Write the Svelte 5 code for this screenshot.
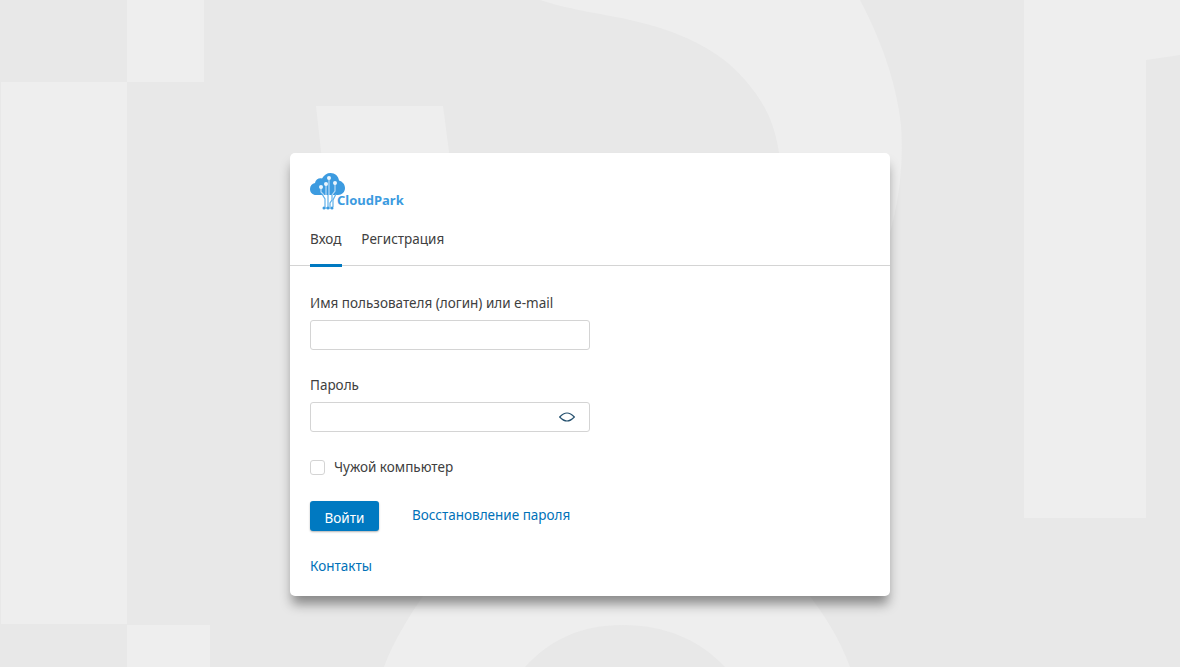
<script>
  let login = $state("");
  let password = $state("");
  let foreign = $state(false);
  let activeTab = $state("login");
</script>

<div class="page">
  <svg class="backdrop" viewBox="0 0 1180 667" aria-hidden="true">
    <path d="M127 0H204V82H127ZM1 82H127V624H1ZM127 625H210V667H127Z" />
    <path d="M316 106H443L450 160H322Z" />
    <path d="M540 0C570 10 610 15 630 20C680 31 720 50 745 80C765 103 776 125 780 160H880V240H888C898 205 904 170 901 125C896 80 880 38 860 0Z" />
    <path d="M384 667C394 640 408 618 427 590H805C825 615 840 640 850 667H725C700 640 665 625 623 625C580 625 550 640 525 667Z" />
    <path d="M1024 0H1180V55L1146 60V518H1024Z" />
  </svg>

  <main class="card">
    <header class="head">
      <div class="logo">
        <svg width="36" height="38" viewBox="0 0 36 38" aria-hidden="true">
          <path fill="#3c9be0" d="M6 22C2.500 22 0 19.500 0 16C0 13 2 10.500 5 10C5.500 6.500 9 4.500 12 5.500C14 2 17 0 20.500 0C25 0 28.500 3 29 7.500C32.500 8.500 35 11.500 35 15C35 19 32 22 28 22Z" />
          <g fill="none" stroke="#b7dbf6" stroke-width="1.200">
            <path d="M19 5V22" />
            <path d="M16 11V22" />
            <path d="M11 14V19L14 22" />
            <path d="M25 10V18L22 22" />
          </g>
          <g fill="none" stroke="#5fb0ea" stroke-width="1.200">
            <path d="M12 21L15 26V34" />
            <path d="M18 22V34" />
            <path d="M22 22V27L20 30V34" />
            <path d="M26 21L23 27V34" />
            <path d="M13 35H23" />
          </g>
          <g fill="#eaf5fd">
            <circle cx="19" cy="5" r="2" />
            <circle cx="16" cy="11" r="2" />
            <circle cx="11" cy="14" r="2" />
            <circle cx="25" cy="10" r="2" />
          </g>
          <g fill="#3c9be0">
            <circle cx="14" cy="35" r="1.500" />
            <circle cx="18" cy="35" r="1.500" />
            <circle cx="22" cy="35" r="1.500" />
          </g>
        </svg>
        <span class="brand">CloudPark</span>
      </div>
      <nav class="tabs">
        <button class="tab" class:active={activeTab === "login"} onclick={() => (activeTab = "login")}>Вход</button>
        <button class="tab" class:active={activeTab === "signup"} onclick={() => (activeTab = "signup")}>Регистрация</button>
      </nav>
    </header>

    <form class="form" onsubmit={(e) => e.preventDefault()}>
      <label class="field">
        <span>Имя пользователя (логин) или e-mail</span>
        <input type="text" bind:value={login} />
      </label>

      <label class="field">
        <span>Пароль</span>
        <div class="password">
          <input type="password" bind:value={password} />
          <svg class="eye" width="16" height="10" viewBox="0 0 16 10" aria-hidden="true">
            <path d="M0.700 5C3.500 2 5.500 1 8 1C10.500 1 12.500 2 15.300 5C12.500 8 10.500 9 8 9C5.500 9 3.500 8 0.700 5Z" />
          </svg>
        </div>
      </label>

      <label class="check">
        <input type="checkbox" bind:checked={foreign} />
        <span>Чужой компьютер</span>
      </label>

      <div class="actions">
        <button class="submit" type="submit">Войти</button>
        <a href="#restore">Восстановление пароля</a>
      </div>

      <a class="contacts" href="#contacts">Контакты</a>
    </form>
  </main>
</div>

<style>
  :global(body) {
    margin: 0;
    font-family: "Noto Sans", sans-serif;
  }
  * {
    box-sizing: border-box;
  }
  .page {
    position: relative;
    height: 667px;
    overflow: hidden;
    background: #e8e8e8;
    display: flex;
    justify-content: center;
    padding-top: 153px;
  }
  .backdrop {
    position: absolute;
    inset: 0;
    width: 100%;
    height: 100%;
    fill: #eeeeee;
  }
  .card {
    position: relative;
    width: 600px;
    height: 443px;
    background: #fff;
    border-radius: 5px;
    box-shadow: 0 10px 12px -2px rgba(0, 0, 0, 0.42);
  }
  .head {
    height: 113px;
    padding: 20px 20px 0;
    border-bottom: 1px solid #d4d4d4;
  }
  .logo {
    position: relative;
    height: 38px;
  }
  .brand {
    position: absolute;
    left: 27px;
    top: 18px;
    font-size: 13px;
    line-height: 19px;
    font-weight: 700;
    color: #3c9be0;
  }
  .tabs {
    display: flex;
    gap: 19px;
    margin-top: 16px;
  }
  .tab {
    height: 40px;
    padding: 0 1px 14px 0;
    border: 0;
    border-bottom: 3px solid transparent;
    background: none;
    font: inherit;
    font-size: 13.500px;
    color: #404040;
  }
  .tab.active {
    border-bottom-color: #0079c1;
  }
  .form {
    padding: 27px 20px 0;
    font-size: 13.500px;
    color: #404040;
  }
  .field {
    display: block;
    margin-bottom: 25px;
  }
  .field span {
    display: block;
    line-height: 20px;
    margin-bottom: 7px;
  }
  input[type="text"],
  input[type="password"] {
    display: block;
    width: 280px;
    height: 30px;
    border: 1px solid #d4d4d4;
    border-radius: 3px;
    background: #fff;
    outline: none;
  }
  .password {
    position: relative;
    width: 280px;
  }
  .eye {
    position: absolute;
    right: 15px;
    top: 10px;
    fill: none;
    stroke: #24506e;
    stroke-width: 1.200;
  }
  .check {
    display: flex;
    align-items: center;
    gap: 9px;
    height: 20px;
    margin-top: 25px;
  }
  .check input {
    appearance: none;
    width: 15px;
    height: 15px;
    margin: 0;
    border: 1px solid #d4d4d4;
    border-radius: 3px;
    background: #fff;
  }
  .actions {
    display: flex;
    align-items: center;
    gap: 33px;
    margin-top: 24px;
  }
  .actions a {
    margin-top: -2px;
  }
  .submit {
    width: 69px;
    height: 30px;
    padding: 3px 0 0;
    border: 0;
    border-radius: 3px;
    background: #0079c1;
    color: #fff;
    font: inherit;
    font-size: 13.500px;
    box-shadow: 0 1px 2px rgba(0, 0, 0, 0.3);
  }
  a {
    color: #0071b8;
    text-decoration: none;
    line-height: 20px;
  }
  .contacts {
    display: block;
    margin-top: 25px;
  }
</style>
